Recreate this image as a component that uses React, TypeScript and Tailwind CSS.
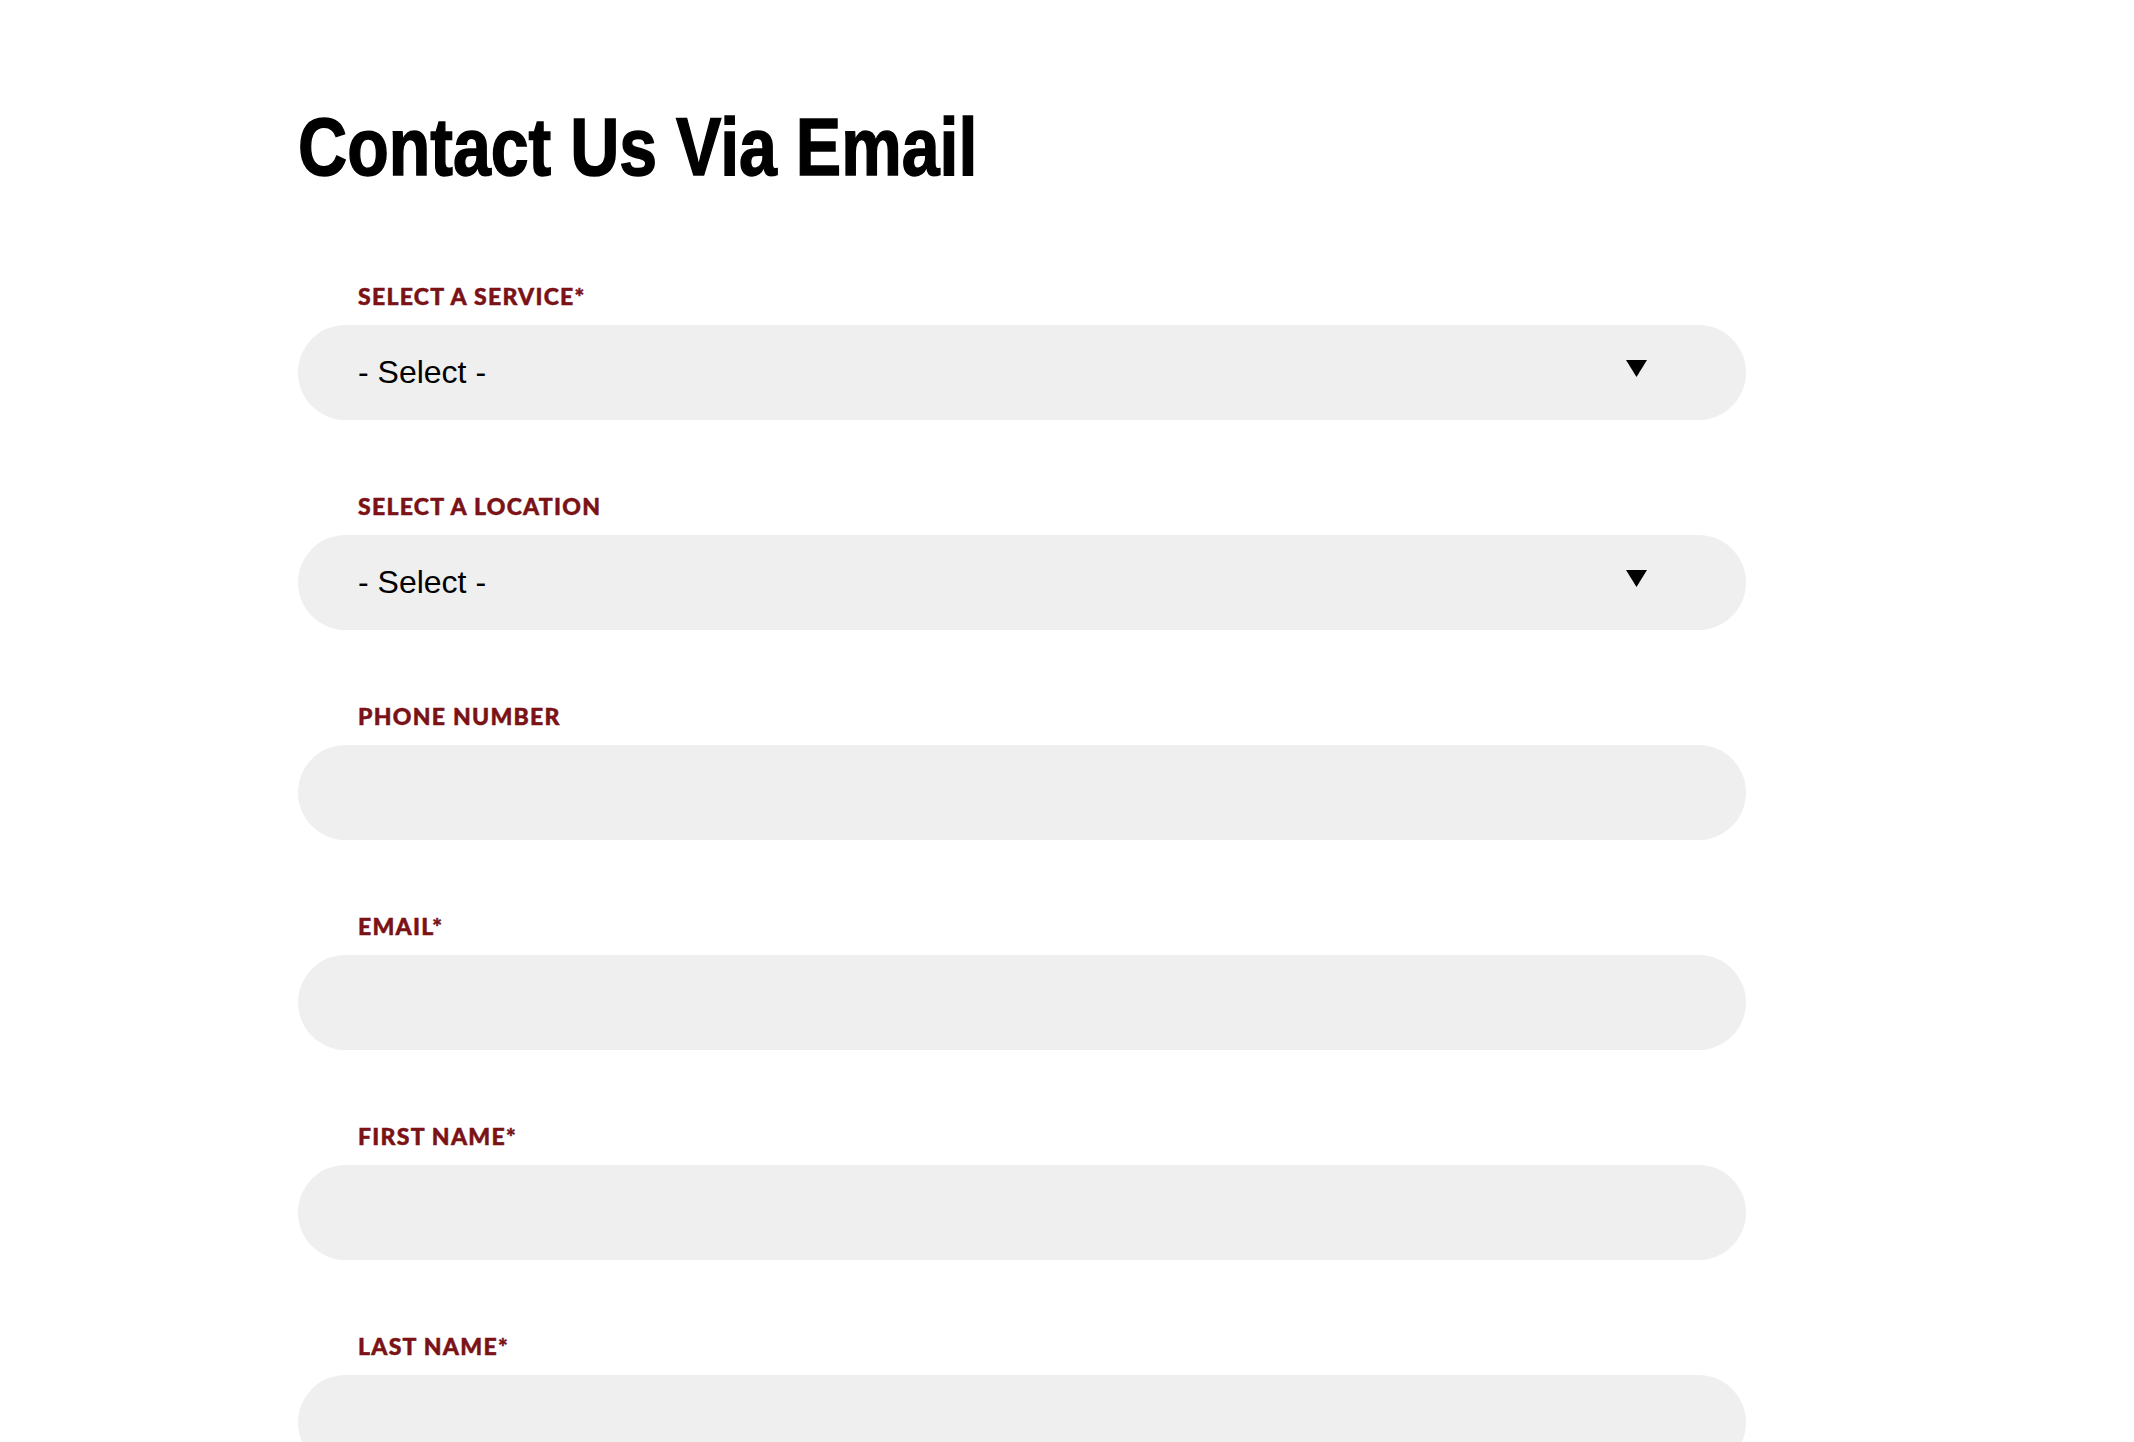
const fields = [
  { label: "Select a Service*", select: true },
  { label: "Select a Location", select: true },
  { label: "Phone Number" },
  { label: "Email*" },
  { label: "First Name*" },
  { label: "Last Name*" },
];

function Caret() {
  return (
    <svg width="21" height="17" viewBox="0 0 21 17" className="mt-[-8px]">
      <polygon points="0,0 21,0 10.5,17" fill="#000" />
    </svg>
  );
}

export default function App() {
  return (
    <div className="min-h-screen bg-white pl-[298px] pt-[107px] pb-20">
      {/* condensed heading: no narrow face installed, so squeeze Liberation Sans */}
      <h1 className="inline-block origin-left scale-x-[0.84] font-['Liberation_Sans',Arial,sans-serif] text-[81px] font-bold leading-none text-black [-webkit-text-stroke:1.5px_#000]">
        Contact Us Via Email
      </h1>

      <form className="mt-[97px] flex w-[1448px] flex-col gap-y-[75px]">
        {fields.map((field) => (
          <div key={field.label} className="flex flex-col gap-y-[17px]">
            <label className="pl-[60px] font-['Lato',sans-serif] text-[23px] font-black uppercase leading-none tracking-[0.055em] text-[#7a1216] [-webkit-text-stroke:0.5px_#7a1216]">
              {field.label}
            </label>
            {field.select ? (
              <div className="flex h-[95px] items-center justify-between rounded-full bg-[#efefef] pl-[60px] pr-[99px]">
                <span className="mt-[-2px] font-['Liberation_Sans',Arial,sans-serif] text-[32px] text-black">
                  - Select -
                </span>
                <Caret />
              </div>
            ) : (
              <input
                type="text"
                className="h-[95px] rounded-full bg-[#efefef] px-[60px] font-['Liberation_Sans',Arial,sans-serif] text-[32px] text-black outline-none"
              />
            )}
          </div>
        ))}
      </form>
    </div>
  );
}
